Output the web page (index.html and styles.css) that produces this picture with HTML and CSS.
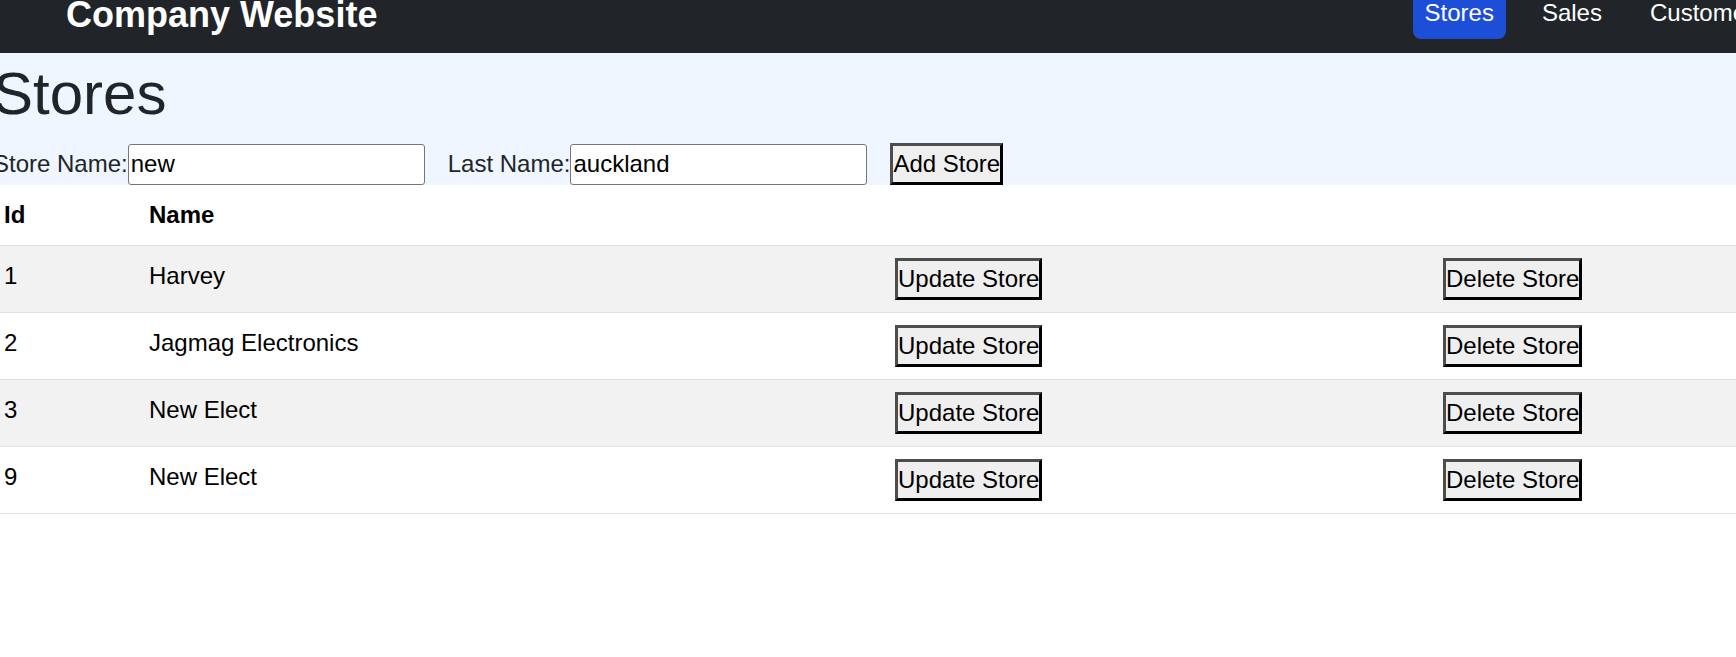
FILE: index.html
```html
<!DOCTYPE html>
<html lang="en">
<head>
<meta charset="utf-8">
<title>Stores</title>
<link rel="stylesheet" href="styles.css">
</head>
<body>
<header class="navbar">
  <div class="brand">Company Website</div>
  <nav class="nav">
    <a class="nav-link active" href="#">Stores</a>
    <a class="nav-link" href="#">Sales</a>
    <a class="nav-link" href="#">Customers</a>
  </nav>
</header>
<main>
  <section class="intro">
    <h1 class="title">Stores</h1>
    <form class="add-form">
      <label class="field"><span class="field-label">Store Name:</span><input class="field-input" type="text" value="new"></label>
      <label class="field"><span class="field-label">Last Name:</span><input class="field-input" type="text" value="auckland"></label>
      <button class="btn" type="button">Add Store</button>
    </form>
  </section>
  <table class="stores">
    <thead>
      <tr>
        <th class="col-id">Id</th>
        <th class="col-name">Name</th>
        <th class="col-update"></th>
        <th class="col-delete"></th>
      </tr>
    </thead>
    <tbody>
      <tr class="striped">
        <td>1</td><td>Harvey</td>
        <td><button class="btn" type="button">Update Store</button></td>
        <td><button class="btn" type="button">Delete Store</button></td>
      </tr>
      <tr>
        <td>2</td><td>Jagmag Electronics</td>
        <td><button class="btn" type="button">Update Store</button></td>
        <td><button class="btn" type="button">Delete Store</button></td>
      </tr>
      <tr class="striped">
        <td>3</td><td>New Elect</td>
        <td><button class="btn" type="button">Update Store</button></td>
        <td><button class="btn" type="button">Delete Store</button></td>
      </tr>
      <tr>
        <td>9</td><td>New Elect</td>
        <td><button class="btn" type="button">Update Store</button></td>
        <td><button class="btn" type="button">Delete Store</button></td>
      </tr>
    </tbody>
  </table>
</main>
</body>
</html>
```

FILE: styles.css
```css
html, body {
  margin: 0;
  padding: 0;
  background: #ffffff;
}

body {
  font-family: "Liberation Sans", Arial, sans-serif;
  font-size: 24px;
  color: #000;
  overflow-x: hidden;
}

/* ---------- navbar ---------- */
.navbar {
  display: flex;
  align-items: flex-start;
  height: 53px;
  background: #212529;
  overflow: hidden;
}

.brand {
  padding-left: 66px;
  margin-top: -3.5px;
  font-size: 36px;
  font-weight: 700;
  line-height: 36px;
  color: #ffffff;
  white-space: nowrap;
}

.nav {
  display: flex;
  gap: 24px;
  margin-left: auto;
  margin-right: -42px;
  margin-top: -13px;
}

.nav-link {
  display: block;
  padding: 8px 12px;
  font-size: 24px;
  line-height: 36px;
  color: #ffffff;
  text-decoration: none;
  border-radius: 8px;
  white-space: nowrap;
}

.nav-link.active {
  background: #1d4ed8;
}

/* ---------- intro / form ---------- */
.intro {
  background: #eff6ff;
  height: 132px;
  overflow: hidden;
}

.title {
  margin: 5px 0 0 -7px;
  font-size: 60px;
  font-weight: 400;
  line-height: 72px;
  color: #212529;
}

.add-form {
  display: flex;
  align-items: center;
  gap: 23px;
  height: 42px;
  margin: 13px 0 0 -7px;
}

.field {
  display: flex;
  align-items: center;
}

.field-label {
  color: #212529;
  white-space: nowrap;
}

.field-input {
  box-sizing: border-box;
  width: 297px;
  height: 41px;
  margin: 0;
  padding: 0 2px;
  border: 1px solid #767676;
  border-radius: 3px;
  background: #ffffff;
  font-family: "Liberation Sans", Arial, sans-serif;
  font-size: 24px;
  color: #000;
}

.btn {
  display: inline-block;
  vertical-align: top;
  margin: 0;
  padding: 0;
  border: 3px solid;
  border-color: #4d4d4d #000000 #000000 #4d4d4d;
  background: #efefef;
  font-family: "Liberation Sans", Arial, sans-serif;
  font-size: 24px;
  line-height: 36px;
  color: #000;
  white-space: nowrap;
}

/* ---------- table ---------- */
.stores {
  table-layout: fixed;
  width: 1744px;
  margin-left: -8px;
  border-collapse: separate;
  border-spacing: 0;
}

.stores th,
.stores td {
  box-sizing: border-box;
  padding: 12px;
  text-align: left;
  vertical-align: top;
  line-height: 36px;
  border-bottom: 1px solid #dee2e6;
  color: #000;
}

.stores .col-id { width: 145px; }
.stores .col-name { width: 746px; }
.stores .col-update { width: 548px; }
.stores .col-delete { width: 305px; }

.stores th {
  font-weight: 700;
}

.stores .striped td {
  background: #f2f2f2;
}
```
